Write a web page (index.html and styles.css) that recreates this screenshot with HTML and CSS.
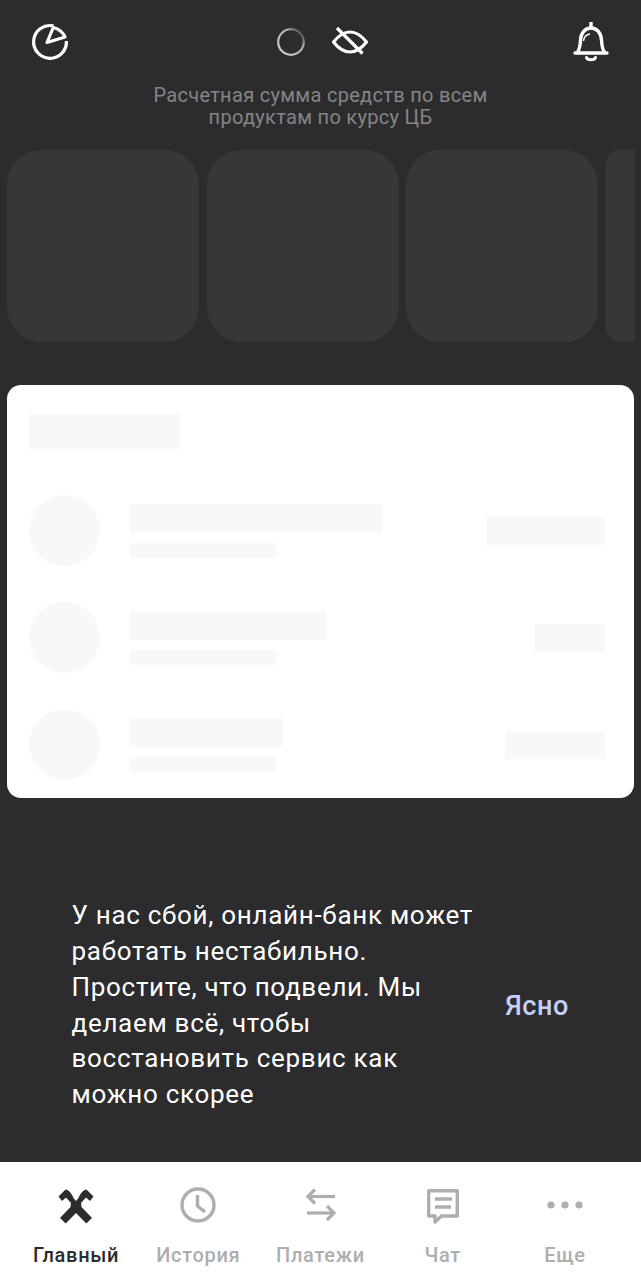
FILE: index.html
```html
<!DOCTYPE html>
<html lang="ru">
<head>
<meta charset="UTF-8">
<meta name="viewport" content="width=device-width, initial-scale=1.0">
<title>Главный</title>
<link rel="stylesheet" href="styles.css">
</head>

<body>

<div class="screen">
    <div class="top-icons">
        <svg width="40" height="40" viewBox="0 0 40 40" fill="none" stroke="#fff" stroke-width="3.2">
            <path d="M23.5 3.900A16.400 16.400 0 1 0 36.400 19"/>
            <path d="M23.300 5.500L17 20.500L35 15C33 10.500 29 7 23.300 5.500Z" stroke-linejoin="round"/>
        </svg>
        <div class="top-middle">
            <svg width="30" height="30" viewBox="0 0 30 30" fill="none" stroke-width="2.200">
                <defs>
                    <linearGradient id="spin" x1="0" y1="1" x2="1" y2="0">
                        <stop offset="0" stop-color="#d4d4d4"/>
                        <stop offset="0.68" stop-color="#a8a8a8"/>
                        <stop offset="0.85" stop-color="#606062"/>
                        <stop offset="1" stop-color="#3a3a3c"/>
                    </linearGradient>
                </defs>
                <circle cx="15" cy="15" r="12.800" stroke="url(#spin)"/>
            </svg>
            <svg width="40" height="32" viewBox="0 0 40 32" fill="none" stroke="#fff" stroke-width="3.200">
                <path d="M3.500 16C9 9 14 6 20 6S31 9 36.500 16C31 23 26 26 20 26S9 23 3.500 16Z" stroke-linejoin="round"/>
                <path d="M7 2L32.500 27.500"/>
            </svg>
        </div>
        <svg width="40" height="42" viewBox="0 0 40 42" fill="none" stroke="#fff" stroke-width="3.400">
            <path d="M20 1V7"/>
            <path d="M6.500 31C9 28 9.200 24 9.500 19C10 12 14 7 20 7S30 12 30.500 19C30.800 24 31 28 33.500 31"/>
            <path d="M4 32H36" stroke-linecap="round"/>
            <path d="M12.500 20C13 16 15.500 13.500 19 13" stroke-width="1.500"/>
            <path d="M15.500 36.500C16.500 39.500 23.500 39.500 24.500 36.500" stroke-linecap="round" stroke-width="3"/>
        </svg>
    </div>

    <p class="note">Расчетная сумма средств по всем<br>продуктам по курсу ЦБ</p>

    <div class="cards">
        <div class="card"></div>
        <div class="card"></div>
        <div class="card"></div>
        <div class="card card-cut"></div>
    </div>

    <div class="panel">
        <div class="skel skel-title"></div>
        <div class="row">
            <div class="skel-round"></div>
            <div class="row-text">
                <div class="skel line-long"></div>
                <div class="skel line-sub"></div>
            </div>
            <div class="skel sum-long"></div>
        </div>
        <div class="row">
            <div class="skel-round"></div>
            <div class="row-text">
                <div class="skel line-mid"></div>
                <div class="skel line-sub"></div>
            </div>
            <div class="skel sum-short"></div>
        </div>
        <div class="row">
            <div class="skel-round"></div>
            <div class="row-text">
                <div class="skel line-short"></div>
                <div class="skel line-sub"></div>
            </div>
            <div class="skel sum-mid"></div>
        </div>
    </div>

    <div class="alert">
        <p class="alert-text">У нас сбой, онлайн-банк может работать нестабильно. Простите, что подвели. Мы делаем всё, чтобы восстановить сервис как можно скорее</p>
        <span class="alert-btn">Ясно</span>
    </div>

    <div class="tabbar">
        <div class="tab active">
            <svg width="40" height="40" viewBox="0 0 40 40" fill="#2c2c2e">
                <path d="M9.700 38.500L4 33L14.500 22L15 18L10 12.500L6 16L2.500 11.500L9.500 4.500C13 5 16 9 17.500 13L20 16L22.500 13C24 9 27 5 30.500 4.500L37.500 11.500L34 16L30 12.500L25 18L25.500 22L36 33L30.300 38.500L20 28Z"/>
            </svg>
            <span>Главный</span>
        </div>
        <div class="tab">
            <svg width="40" height="40" viewBox="0 0 40 40" fill="none" stroke="#aeaeae" stroke-width="3.400">
                <circle cx="20" cy="20" r="16"/>
                <path d="M19.500 10V21L27 27"/>
            </svg>
            <span>История</span>
        </div>
        <div class="tab">
            <svg width="40" height="40" viewBox="0 0 40 40" fill="none" stroke="#aeaeae" stroke-width="3.200">
                <path d="M34 11.500H8"/>
                <path d="M14 4.500L7 11.500L14 18.500"/>
                <path d="M6 28H32"/>
                <path d="M26 21L33 28L26 35"/>
            </svg>
            <span>Платежи</span>
        </div>
        <div class="tab">
            <svg width="40" height="40" viewBox="0 0 40 40" fill="none" stroke="#aeaeae" stroke-width="3.400">
                <path d="M5.700 5.700H34.300V31H18.500L12 37V31H5.700Z" stroke-linejoin="round"/>
                <path d="M12 14H29M12 22H28"/>
            </svg>
            <span>Чат</span>
        </div>
        <div class="tab">
            <svg width="40" height="40" viewBox="0 0 40 40" fill="#aeaeae">
                <circle cx="6" cy="20" r="3.600"/>
                <circle cx="20" cy="20" r="3.600"/>
                <circle cx="34" cy="20" r="3.600"/>
            </svg>
            <span>Еще</span>
        </div>
    </div>
</div>

</body>
</html>
```

FILE: styles.css
```css
body {
    margin: 0;
    font-family: Roboto, 'Noto Sans', sans-serif;
    background: #2c2c2e;
}

p {
    margin: 0;
}

.screen {
    width: 641px;
    height: 1280px;
    display: flex;
    flex-direction: column;
    overflow: hidden;
}

.top-icons {
    display: flex;
    align-items: center;
    justify-content: space-between;
    height: 42px;
    margin-top: 21px;
    padding: 0 30px;
}

.top-middle {
    display: flex;
    align-items: center;
    gap: 24px;
    margin-left: 5px;
}

.note {
    margin-top: 21px;
    text-align: center;
    font-size: 20px;
    line-height: 22px;
    letter-spacing: 0.3px;
    color: #858585;
}

.cards {
    display: flex;
    gap: 7.500px;
    margin-top: 22px;
    padding: 0 7px;
}

.card {
    flex: none;
    width: 192px;
    height: 192px;
    background: #373737;
    border-radius: 34px;
}

.card-cut {
    width: 29px;
    border-radius: 14px 0 0 14px;
}

.panel {
    margin: 43px 7px 0;
    height: 413px;
    box-sizing: border-box;
    padding: 29px 29px 0 22px;
    background: #fff;
    border-radius: 14px;
}

.skel {
    background: #f8f8f8;
}

.skel-title {
    width: 151px;
    height: 35px;
    margin-bottom: 46px;
}

.row {
    display: flex;
    align-items: center;
    height: 71px;
    margin-bottom: 36px;
}

.skel-round {
    flex: none;
    width: 71px;
    height: 71px;
    border-radius: 50%;
    background: #f8f8f8;
}

.row-text {
    flex: 1;
    margin-left: 30px;
}

.line-long {
    width: 253px;
    height: 29px;
}

.line-mid {
    width: 196px;
    height: 29px;
}

.line-short {
    width: 153px;
    height: 29px;
}

.line-sub {
    width: 146px;
    height: 15px;
    margin-top: 10px;
}

.sum-long {
    width: 119px;
    height: 28px;
}

.sum-mid {
    width: 100px;
    height: 28px;
}

.sum-short {
    width: 71px;
    height: 28px;
}

.alert {
    flex: 1;
    display: flex;
    align-items: center;
    justify-content: space-between;
    padding: 51px 72px 0 71.500px;
}

.alert-text {
    width: 414px;
    font-size: 26px;
    line-height: 35.800px;
    letter-spacing: 0.7px;
    color: #fff;
}

.alert-btn {
    font-size: 27px;
    font-weight: 500;
    letter-spacing: 0.6px;
    color: #c5cff5;
}

.tabbar {
    flex: none;
    display: flex;
    height: 118px;
    padding: 0 15px;
    background: #fff;
}

.tab {
    flex: 1;
    display: flex;
    flex-direction: column;
    align-items: center;
    padding-top: 23px;
    font-size: 20px;
    font-weight: 500;
    letter-spacing: 0.7px;
    color: #aeaeae;
}

.tab span {
    margin-top: 18px;
}

.tab.active {
    color: #2c2c2e;
}
```
